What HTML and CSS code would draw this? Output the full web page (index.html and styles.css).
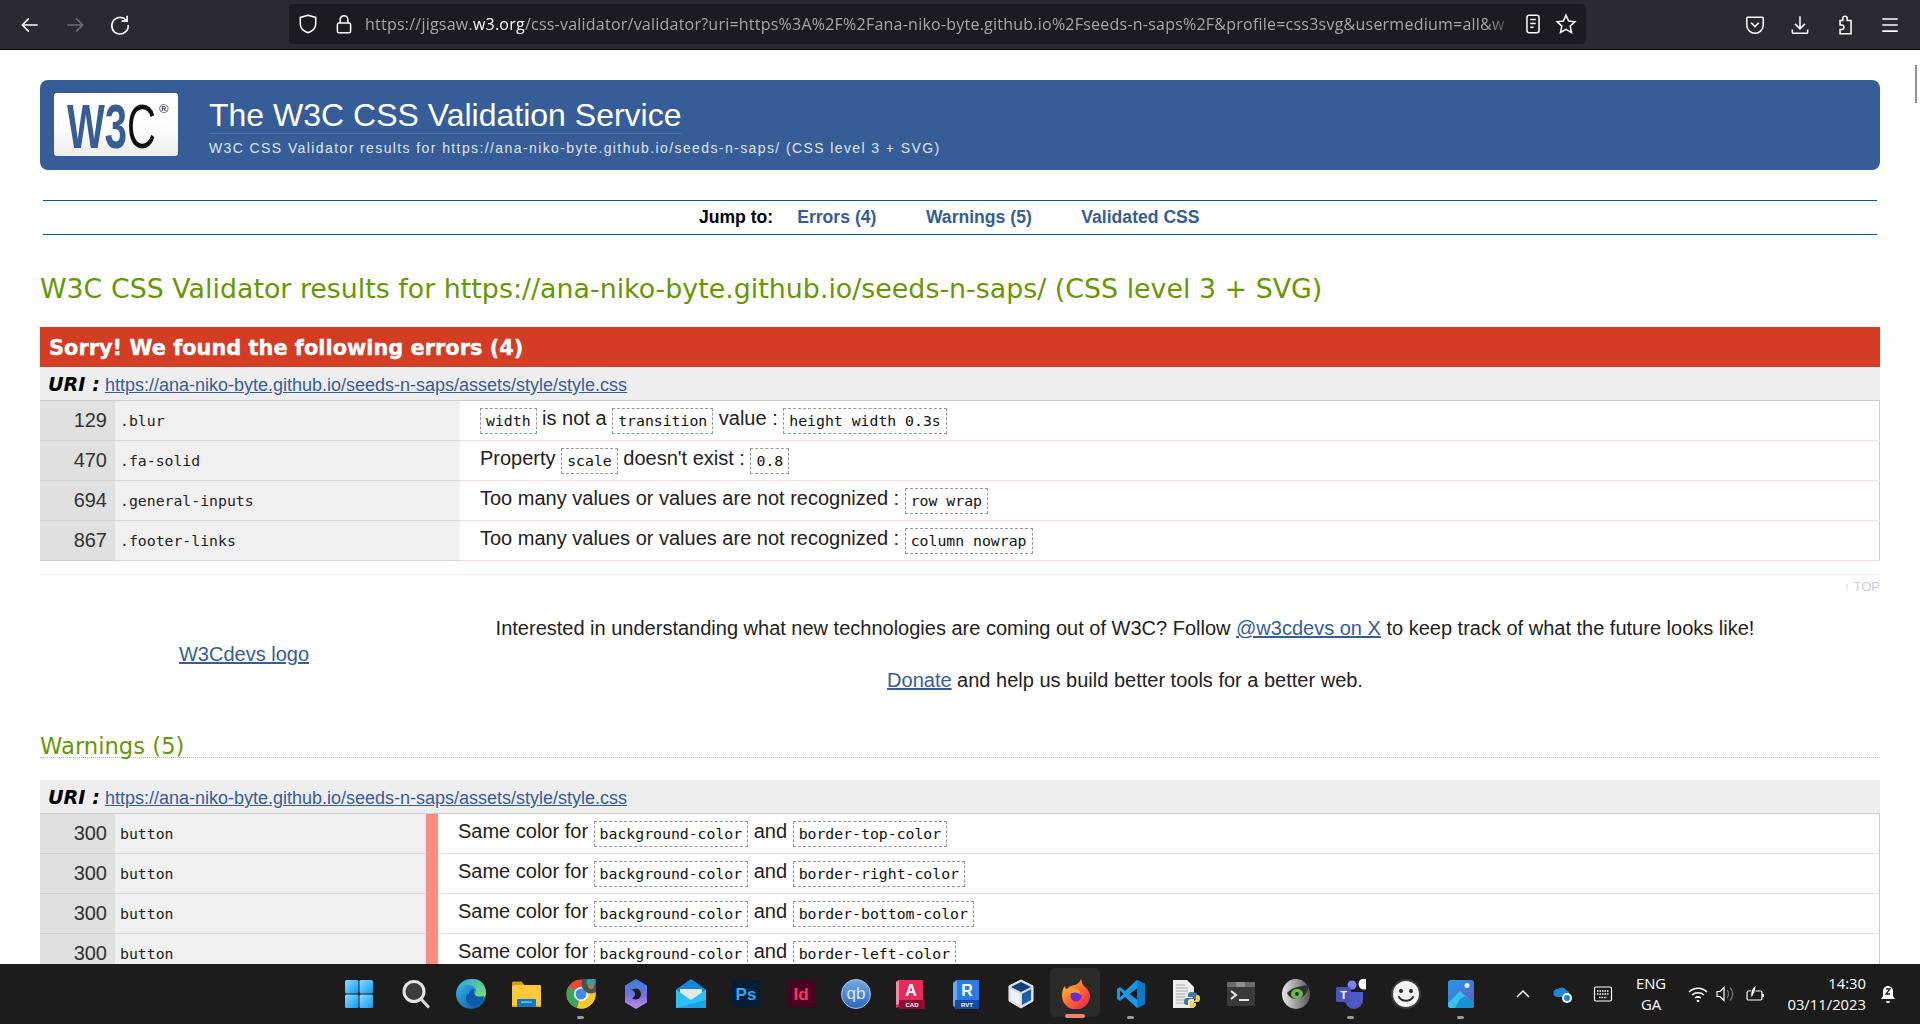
FILE: index.html
```html
<!DOCTYPE html>
<html lang="en">
<head>
<meta charset="utf-8">
<title>W3C CSS Validator results</title>
<link rel="stylesheet" href="styles.css">
</head>
<body>
<div class="screen">
  <header class="toolbar">
    <div class="nav-buttons">
      <svg class="tb-icon" viewBox="0 0 20 20"><path d="M17 10H3M9 4l-6 6 6 6" fill="none" stroke="#fbfbfe" stroke-width="1.4"/></svg>
      <svg class="tb-icon" viewBox="0 0 20 20"><path d="M3 10h14M11 4l6 6-6 6" fill="none" stroke="#6f6e75" stroke-width="1.4"/></svg>
      <svg class="tb-icon" viewBox="0 0 20 20"><path d="M15.5 5.5A7.5 7.5 0 1 0 17.5 10M16.5 1.5v5h-5" fill="none" stroke="#fbfbfe" stroke-width="1.5"/></svg>
    </div>
    <div class="urlbar">
      <svg class="url-icon" viewBox="0 0 20 20"><path d="M10 2l7 2v6c0 4-3 6.5-7 8-4-1.500-7-4-7-8V4z" fill="none" stroke="#fbfbfe" stroke-width="1.4"/></svg>
      <svg class="url-icon lock" viewBox="0 0 20 20"><path d="M6.5 9V6a3.5 3.5 0 0 1 7 0v3" fill="none" stroke="#fbfbfe" stroke-width="1.4"/><rect x="4" y="9" width="12" height="9" rx="1.5" fill="none" stroke="#fbfbfe" stroke-width="1.4"/></svg>
      <div class="url-text">https://jigsaw.<b>w3.org</b>/css-validator/validator?uri=https%3A%2F%2Fana-niko-byte.github.io%2Fseeds-n-saps%2F&amp;profile=css3svg&amp;usermedium=all&amp;w</div>
      <svg class="url-icon reader" viewBox="0 0 20 20"><rect x="4.5" y="2" width="11" height="16" rx="2" fill="none" stroke="#fbfbfe" stroke-width="1.4"/><path d="M7.5 6h5M7.5 9.500h5M7.5 13h3" stroke="#fbfbfe" stroke-width="1.4"/></svg>
      <svg class="url-icon star" viewBox="0 0 20 20"><path d="M10 2l2.4 5.400 5.600.6-4.200 3.900 1.200 5.800L10 14.800l-5 2.900 1.200-5.800L2 8l5.600-.6z" fill="none" stroke="#fbfbfe" stroke-width="1.4"/></svg>
    </div>
    <div class="tool-buttons">
      <svg class="tb-icon" viewBox="0 0 20 20"><path d="M3.5 3h13a1 1 0 0 1 1 1v6a7.500 7.500 0 0 1-15 0V4a1 1 0 0 1 1-1z" fill="none" stroke="#fbfbfe" stroke-width="1.4"/><path d="M6.5 8l3.500 3.500L13.500 8" fill="none" stroke="#fbfbfe" stroke-width="1.4"/></svg>
      <svg class="tb-icon" viewBox="0 0 20 20"><path d="M10 2v11M5.5 9l4.500 4.500L14.500 9M3 14v2.500a1 1 0 0 0 1 1h12a1 1 0 0 0 1-1V14" fill="none" stroke="#fbfbfe" stroke-width="1.4"/></svg>
      <svg class="tb-icon" viewBox="0 0 20 20"><path d="M8 5V4a2 2 0 0 1 4 0v2h3.500v12H5.500v-4H7a2 2 0 0 0 0-4H5.500V6H8z" fill="none" stroke="#fbfbfe" stroke-width="1.4"/></svg>
      <svg class="tb-icon" viewBox="0 0 20 20"><path d="M3 4.500h14M3 10h14M3 15.500h14" stroke="#fbfbfe" stroke-width="1.5"/></svg>
    </div>
  </header>

  <main class="page">
    <div class="scroll-thumb"></div>
    <section class="banner">
      <div class="logo-box">
        <svg class="logo" viewBox="0 0 124 62"><text class="logo-mark" x="13" y="55" textLength="89" lengthAdjust="spacingAndGlyphs"><tspan class="logo-blue">W3</tspan><tspan class="logo-black">C</tspan></text><text class="logo-reg" x="105" y="20">®</text></svg>
      </div>
      <div class="banner-text">
        <h1 class="service-title">The W3C CSS Validation Service</h1>
        <p class="service-sub">W3C CSS Validator results for https://ana-niko-byte.github.io/seeds-n-saps/ (CSS level 3 + SVG)</p>
      </div>
    </section>

    <nav class="jump">
      <span class="jump-label">Jump to:</span>
      <a class="jump-link" href="#errors">Errors (4)</a>
      <a class="jump-link" href="#warnings">Warnings (5)</a>
      <a class="jump-link" href="#css">Validated CSS</a>
    </nav>

    <h2 class="results-title">W3C CSS Validator results for https://ana-niko-byte.github.io/seeds-n-saps/ (CSS level 3 + SVG)</h2>

    <h3 class="error-bar" id="errors">Sorry! We found the following errors (4)</h3>
    <div class="uri-row"><span class="uri-label">URI :</span> <a class="uri-link" href="#">https://ana-niko-byte.github.io/seeds-n-saps/assets/style/style.css</a></div>
    <table class="report">
      <colgroup><col class="col-line"><col class="col-sel"><col></colgroup>
      <tr><td class="line">129</td><td class="sel">.blur</td><td class="msg"><code>width</code> is not a <code>transition</code> value : <code>height width 0.3s</code></td></tr>
      <tr><td class="line">470</td><td class="sel">.fa-solid</td><td class="msg">Property <code>scale</code> doesn't exist : <code>0.8</code></td></tr>
      <tr><td class="line">694</td><td class="sel">.general-inputs</td><td class="msg">Too many values or values are not recognized : <code>row wrap</code></td></tr>
      <tr><td class="line">867</td><td class="sel">.footer-links</td><td class="msg">Too many values or values are not recognized : <code>column nowrap</code></td></tr>
    </table>

    <div class="top-row"><a class="top-link" href="#">↑ TOP</a></div>

    <section class="promo">
      <a class="promo-logo" href="#">W3Cdevs logo</a>
      <div class="promo-text">
        <p class="promo-line">Interested in understanding what new technologies are coming out of W3C? Follow <a href="#">@w3cdevs on X</a> to keep track of what the future looks like!</p>
        <p class="promo-line"><a href="#">Donate</a> and help us build better tools for a better web.</p>
      </div>
    </section>

    <h3 class="warn-title" id="warnings">Warnings (5)</h3>
    <div class="uri-row"><span class="uri-label">URI :</span> <a class="uri-link" href="#">https://ana-niko-byte.github.io/seeds-n-saps/assets/style/style.css</a></div>
    <table class="report warn">
      <colgroup><col class="col-line"><col class="col-sel-w"><col class="col-level"><col></colgroup>
      <tr><td class="line">300</td><td class="sel">button</td><td class="level"></td><td class="msg">Same color for <code>background-color</code> and <code>border-top-color</code></td></tr>
      <tr><td class="line">300</td><td class="sel">button</td><td class="level"></td><td class="msg">Same color for <code>background-color</code> and <code>border-right-color</code></td></tr>
      <tr><td class="line">300</td><td class="sel">button</td><td class="level"></td><td class="msg">Same color for <code>background-color</code> and <code>border-bottom-color</code></td></tr>
      <tr><td class="line">300</td><td class="sel">button</td><td class="level"></td><td class="msg">Same color for <code>background-color</code> and <code>border-left-color</code></td></tr>
    </table>
  </main>

  <footer class="taskbar">
    <div class="apps">
      <div class="app"><svg class="app-icon" viewBox="0 0 30 30"><defs><linearGradient id="win" x1="0" y1="0" x2="1" y2="1"><stop offset="0" stop-color="#8fdcff"/><stop offset="1" stop-color="#0a9bf5"/></linearGradient></defs><g fill="url(#win)"><rect x="1" y="1" width="13.5" height="13.5" rx="1.5"/><rect x="15.5" y="1" width="13.5" height="13.5" rx="1.5"/><rect x="1" y="15.5" width="13.5" height="13.5" rx="1.5"/><rect x="15.5" y="15.5" width="13.5" height="13.5" rx="1.5"/></g></svg></div>
      <div class="app"><svg class="app-icon" viewBox="0 0 30 30"><circle cx="13" cy="12.5" r="10" fill="#3d3d3d" stroke="#e4e4e4" stroke-width="3"/><path d="M20.5 20.5L27 27.5" stroke="#d8d8d8" stroke-width="3.2" stroke-linecap="round"/></svg></div>
      <div class="app"><svg class="app-icon" viewBox="0 0 30 30"><defs><linearGradient id="edge1" x1="0" y1="0" x2="1" y2="1"><stop offset="0" stop-color="#35c1f1"/><stop offset="1" stop-color="#0b4d9e"/></linearGradient><linearGradient id="edge2" x1="0" y1="0" x2="1" y2="1"><stop offset="0" stop-color="#2ca9d8"/><stop offset="1" stop-color="#7fe36b"/></linearGradient></defs><circle cx="15" cy="15" r="15" fill="url(#edge1)"/><path d="M3 9C6 2 13 0 17 0c8 0 13 6 13 14 0 4-3 6-7 6-3 0-5-1-5-3 0-3 2-3 2-6-1-4-6-6-10-5-3 .5-5 1.5-7 3z" fill="url(#edge2)"/><path d="M13 15c0-3 2-5 5-5-1 3 0 5 2 7 2 1 5 1 8 0-2 7-7 11-12 10-4-1-6-5-6-8s1-4 3-4z" fill="#0c59a4"/></svg></div>
      <div class="app"><svg class="app-icon" viewBox="0 0 30 30"><path d="M1 4a1.5 1.5 0 0 1 1.5-1.5h8l3 3.5H1z" fill="#d99e0b"/><rect x="1" y="6" width="29" height="22" rx="1" fill="#fcc83d"/><rect x="1" y="26.5" width="29" height="1.5" fill="#e0a40f"/><rect x="6" y="20" width="19" height="8" rx="1" fill="#0f79c4"/><rect x="10" y="22.5" width="11" height="1.2" fill="#9ed4f5"/></svg></div>
      <div class="app"><svg class="app-icon" viewBox="0 0 30 30"><circle cx="15" cy="15" r="14.5" fill="#e84b3a"/><path d="M15 15L2.5 7.500A14.5 14.5 0 0 0 11 29z" fill="#3aa757"/><path d="M15 15l-4 14A14.5 14.5 0 0 0 28.500 9.500H15z" fill="#fbc72e"/><circle cx="15" cy="15" r="7" fill="#fff"/><circle cx="15" cy="15" r="5.5" fill="#3f89f3"/><circle cx="25" cy="5" r="9.5" fill="#4a5550"/><circle cx="25" cy="3" r="4.5" fill="#2e9fa8"/><circle cx="25" cy="7" r="3" fill="#96806c"/></svg></div>
      <div class="app"><svg class="app-icon" viewBox="0 0 30 30"><defs><linearGradient id="cop" x1="0" y1="0" x2="0" y2="1"><stop offset="0" stop-color="#2f86d8"/><stop offset=".55" stop-color="#7a6fe0"/><stop offset="1" stop-color="#c48ae8"/></linearGradient></defs><path d="M15 0l11 6.5v17L15 30 4 23.5v-17z" fill="url(#cop)"/><path d="M9.500 11l5-1.500c4 0 5.500 3 5.500 5.500s-1.500 5.500-5.500 5.500c-1.500 0-3-1-3.500-1.500 2-.5 3-2 3-4s-1.500-3.500-4.500-4.500z" fill="#1b1b1b"/></svg></div>
      <div class="app"><svg class="app-icon" viewBox="0 0 30 30"><path d="M0 10.5L15 0l15 10.5V29H0z" fill="#1287d8"/><path d="M4 10h22v6l-11 6-11-6z" fill="#e8e8e8"/><path d="M0 10.5L15 21l15-10.5V29H0z" fill="#2cc0f3"/><path d="M0 29l30-8V29z" fill="#1199e2" opacity=".7"/></svg></div>
      <div class="app"><svg class="app-icon" viewBox="0 0 30 30"><rect x="1" y="1" width="28" height="27" rx="5" fill="#001e36"/><text class="icon-text ps" x="15" y="21">Ps</text></svg></div>
      <div class="app"><svg class="app-icon" viewBox="0 0 30 30"><rect x="1" y="1" width="28" height="27" rx="5" fill="#49021f"/><text class="icon-text id" x="15" y="21">Id</text></svg></div>
      <div class="app"><svg class="app-icon" viewBox="0 0 30 30"><defs><linearGradient id="qb" x1="0" y1="0" x2="0" y2="1"><stop offset="0" stop-color="#76a9e6"/><stop offset="1" stop-color="#2c68bf"/></linearGradient></defs><circle cx="15" cy="15" r="14.5" fill="url(#qb)" stroke="#a6c8ee" stroke-width="1"/><text class="icon-text qb" x="15" y="20">qb</text></svg></div>
      <div class="app"><svg class="app-icon" viewBox="0 0 30 30"><path d="M0 3l3-2h24v27H3l-3 1z" fill="#e8295c"/><path d="M0 3v23l3-1V1z" fill="#f08aa6"/><rect x="3" y="21" width="26" height="9" fill="#8e0d33"/><text class="icon-text a" x="15" y="17">A</text><text class="icon-text sub" x="16" y="28">CAD</text></svg></div>
      <div class="app"><svg class="app-icon" viewBox="0 0 30 30"><path d="M2 4l4-3h22v29H6l-4-3z" fill="#2a7be8"/><path d="M2 4v22l4 3V1z" fill="#6aa9f3"/><rect x="4" y="21" width="24" height="9" fill="#104aa3"/><text class="icon-text a" x="16" y="17">R</text><text class="icon-text sub" x="16" y="28">RVT</text></svg></div>
      <div class="app"><svg class="app-icon" viewBox="0 0 30 30"><path d="M15 1l12 6v15l-12 7-12-7V7z" fill="#d8dde5" stroke="#eef1f5" stroke-width="1"/><path d="M15 3l10 5-10 5-10-5z" fill="#123f78"/><path d="M5 10l9 5v11l-9-5z" fill="#eef1f5"/><path d="M16 15l9-5v11l-9 5z" fill="#1c5fa8"/></svg></div>
      <div class="app active"><svg class="app-icon" viewBox="0 0 30 30"><defs><linearGradient id="fx" x1="0" y1="0" x2="1" y2="1"><stop offset="0" stop-color="#ffcc33"/><stop offset=".5" stop-color="#ff6a2c"/><stop offset="1" stop-color="#e3155f"/></linearGradient></defs><path d="M20 0c1 3 1 5 3 7 4 3 6 6 6 10a14 13.500 0 0 1-28 0c0-5 1-8 3-10 0 2 1 3 2 3 2-3 6-4 8-4 3-1 5-3 6-6z" fill="url(#fx)"/><circle cx="15" cy="17" r="5.5" fill="#6c2bd0"/><path d="M4 12c3-3 7-4 11-2 3 1 5 3 5 6-2-2-5-3-8-2-3 0-6 0-8-2z" fill="#ff9d3a"/></svg></div>
      <div class="app"><svg class="app-icon" viewBox="0 0 30 30"><path d="M21 1l8 4v20l-8 4L9 18l-5 4-3-2v-10l3-2 5 4z" fill="#1a97e4"/><path d="M21 1l8 4v20l-8 4z" fill="#0a7bc8"/><path d="M21 9.5L13.500 15l7.500 5.500z" fill="#1b1b1b"/><path d="M4 11.5l3.500 3.500L4 18.500z" fill="#1b1b1b"/></svg></div>
      <div class="app"><svg class="app-icon" viewBox="0 0 30 30"><path d="M2 1h14l7 7v21H2z" fill="#ececec"/><path d="M5 6h9M5 9h12M5 12h12M5 15h9M5 18h9M5 21h9M5 24h9" stroke="#aaa" stroke-width="1"/><path d="M18 13c-3 0-4 1-4 3v2h5v1h-6c-2 0-3 1-3 4 0 2 1 3 3 3h1v-3c0-2 1-3 3-3h4c1 0 2-1 2-2v-3c0-1-2-2-5-2z" transform="translate(3 0)" fill="#3b78aa"/><path d="M20 29c3 0 5-1 5-3v-2h-5v-1h6c2 0 3-1 3-4 0-2-1-3-3-3h-1v3c0 2-1 3-3 3h-3v3c0 3 0 4 1 4z" fill="#fcd24a"/></svg></div>
      <div class="app"><svg class="app-icon" viewBox="0 0 30 30"><rect x="1" y="3" width="28" height="24" rx="1" fill="#3a3a3a"/><rect x="1" y="3" width="28" height="5" fill="#6b6b6b"/><rect x="10" y="3" width="9" height="5" fill="#8f8f8f"/><path d="M5 12l5 4-5 4" fill="none" stroke="#e8e8e8" stroke-width="2"/><path d="M13 21h10" stroke="#e8e8e8" stroke-width="2"/></svg></div>
      <div class="app"><svg class="app-icon" viewBox="0 0 30 30"><defs><linearGradient id="eye" x1="0" y1="0" x2="1" y2="0"><stop offset="0" stop-color="#e8e8e8"/><stop offset="1" stop-color="#555"/></linearGradient></defs><ellipse cx="15" cy="15" rx="14" ry="15" fill="url(#eye)"/><path d="M6 14c5-6 14-7 22-8-1 8-6 14-13 14-4 0-7-2-9-6z" fill="#2f2f2f"/><ellipse cx="16" cy="15" rx="6" ry="5" fill="#6ebb55"/><circle cx="16" cy="15" r="2" fill="#1d3316"/></svg></div>
      <div class="app"><svg class="app-icon" viewBox="0 0 30 30"><circle cx="16" cy="6" r="4.5" fill="#7b83eb"/><path d="M8 13h19v8a9 9 0 0 1-18 0z" fill="#5059c9"/><rect x="0" y="8" width="15" height="15" rx="1.5" fill="#4b53bc"/><text class="icon-text t" x="7.5" y="20">T</text><circle cx="28" cy="5" r="5.500" fill="#fbfbfb"/></svg></div>
      <div class="app"><svg class="app-icon" viewBox="0 0 30 30"><circle cx="15" cy="15" r="14" fill="#f4f4f4" stroke="#3c3c3c" stroke-width="2"/><circle cx="10" cy="12" r="2" fill="#2b2b2b"/><circle cx="20" cy="12" r="2" fill="#2b2b2b"/><path d="M8 18c3 5 11 5 14 0" fill="none" stroke="#2b2b2b" stroke-width="2" stroke-linecap="round"/></svg></div>
      <div class="app"><svg class="app-icon" viewBox="0 0 30 30"><defs><linearGradient id="ph" x1="0" y1="0" x2="1" y2="1"><stop offset="0" stop-color="#1f9ee8"/><stop offset="1" stop-color="#7153c2"/></linearGradient></defs><rect x="2" y="1" width="26" height="28" rx="3" fill="url(#ph)"/><circle cx="21" cy="6.5" r="2.5" fill="#dff3ff"/><path d="M2 24l12-12 14 13v1a3 3 0 0 1-3 3H5a3 3 0 0 1-3-3z" fill="#35c2ee"/><path d="M14 20l5-3 9 8v1a3 3 0 0 1-3 3H9z" fill="#0a7fc9" opacity=".7"/></svg></div>
    </div>
    <div class="tray">
      <svg class="tray-icon chev" viewBox="0 0 16 16"><path d="M2 11l6-6 6 6" fill="none" stroke="#fff" stroke-width="1.5"/></svg>
      <svg class="tray-icon cloud" viewBox="0 0 20 20"><path d="M4 13a4 4 0 0 1 1-8 5 5 0 0 1 8 1 4 4 0 0 1 2 7z" fill="#1c86d6"/><circle cx="14" cy="14" r="5" fill="#fff"/><circle cx="14" cy="14" r="3" fill="#1c86d6"/></svg>
      <svg class="tray-icon kbd" viewBox="0 0 20 20"><rect x="1.5" y="3" width="17" height="14" rx="1.5" fill="none" stroke="#fff" stroke-width="1.2"/><path d="M4 7h12M4 10h12M6 13.500h8" stroke="#fff" stroke-width="1.5" stroke-dasharray="1.5 1"/></svg>
      <div class="lang"><span>ENG</span><span>GA</span></div>
      <svg class="tray-icon wifi" viewBox="0 0 20 20"><path d="M1 8c5-5 13-5 18 0M4 11c3.500-3 8.500-3 12 0M7 14c2-1.500 4-1.500 6 0" fill="none" stroke="#fff" stroke-width="1.5"/><circle cx="10" cy="17" r="1.3" fill="#fff"/></svg>
      <svg class="tray-icon speaker" viewBox="0 0 20 20"><path d="M2 7.5h3l4-4v13l-4-4H2z" fill="none" stroke="#fff" stroke-width="1.2"/><path d="M12 6c2 2 2 6 0 8M15 3.500c3.500 3.500 3.500 9.500 0 13" fill="none" stroke="#777" stroke-width="1.2"/></svg>
      <svg class="tray-icon batt" viewBox="0 0 20 20"><rect x="2" y="7" width="15" height="9" rx="1.5" fill="none" stroke="#fff" stroke-width="1.2"/><rect x="17" y="10" width="2" height="3" fill="#fff"/><path d="M11 1c-4 3-6 7-5 13 3-3 5-7 5-13z" fill="#fff" stroke="#1b1b1b"/></svg>
      <div class="clock"><span>14:30</span><span>03/11/2023</span></div>
      <svg class="tray-icon bell" viewBox="0 0 20 20"><path d="M10 2a5 5 0 0 0-5 5v5l-2 3h14l-2-3V7a5 5 0 0 0-5-5z" fill="#fff"/><path d="M8 17h4a2 2 0 0 1-4 0z" fill="#fff"/><path d="M8 5h4l-4 5h4" fill="none" stroke="#1b1b1b" stroke-width="1.3"/></svg>
    </div>
  </footer>
</div>
</body>
</html>
```

FILE: styles.css
```css
* { box-sizing: border-box; }
html, body { margin: 0; padding: 0; }
body { font-family: "Liberation Sans", Arial, sans-serif; background: #fff; color: #000; }

.screen { width: 1920px; height: 1024px; display: flex; flex-direction: column; overflow: hidden; }

/* browser toolbar */
.toolbar { height: 50px; flex: none; display: flex; align-items: center; background: #2b2a33; border-bottom: 1px solid #0c0c0d; padding-left: 19px; }
.nav-buttons { display: flex; gap: 23px; width: 270px; flex: none; }
.tb-icon { width: 22px; height: 22px; flex: none; }
.urlbar { width: 1297px; height: 40px; flex: none; background: #1c1b22; border-radius: 4px; display: flex; align-items: center; padding: 0 9px 0 8px; margin-top: -2px; }
.url-icon { width: 22px; height: 22px; flex: none; }
.lock { margin-left: 14px; }
.url-text { flex: 1; min-width: 0; margin-left: 10px; font-family: "Open Sans", sans-serif; font-size: 16px; letter-spacing: .23px; color: #a5a5aa; white-space: nowrap; -webkit-mask-image: linear-gradient(to left, transparent 0, #000 28px); mask-image: linear-gradient(to left, transparent 0, #000 28px); }
.url-text b { font-weight: 400; color: #fbfbfe; }
.reader { margin-left: 7px; }
.star { margin-left: 11px; }
.tool-buttons { display: flex; gap: 23px; margin-left: 158px; flex: none; }

/* page */
.page { flex: 1; min-height: 0; position: relative; overflow: hidden; background: #fff; padding: 30px 40px 0; }
.scroll-thumb { position: absolute; top: 15px; right: 3px; width: 2px; height: 38px; background: #8f8f9d; }

.banner { height: 90px; background: #365d97; border-radius: 8px; display: flex; align-items: flex-start; }
.logo-box { width: 124px; height: 63px; margin: 13px 0 0 14px; flex: none; background: linear-gradient(#fff 50%, #ececec); border-radius: 3px; }
.logo { display: block; width: 124px; height: 62px; overflow: visible; }
.logo-mark { font-family: "Liberation Sans", sans-serif; font-size: 63px; font-weight: 700; }
.logo-blue { fill: #365d97; }
.logo-black { fill: #111; font-weight: 400; }
.logo-reg { font-family: "Liberation Sans", sans-serif; font-size: 13px; font-weight: 700; fill: #555; }
.banner-text { margin-left: 31px; color: #fff; }
.service-title { margin: 17px 0 0; font-size: 32px; line-height: 36px; font-weight: 400; border-bottom: 1px solid #4f76ad; display: inline-block; }
.service-sub { margin: 6px 0 0; font-size: 14px; line-height: 16px; letter-spacing: 1.4px; color: #dfe6f0; }

.jump { margin: 30px 3px 0; height: 35px; border-top: 1px solid #005a9c; border-bottom: 1px solid #005a9c; display: flex; align-items: center; justify-content: center; padding-right: 21.5px; font-size: 17.6px; font-weight: 700; }
.jump-label { color: #000; margin-right: 24px; }
.jump-link { color: #365d97; text-decoration: none; margin-right: 49.5px; }
.jump-link:last-child { margin-right: 0; }

.results-title { margin: 0; padding-top: 36px; height: 92px; font-family: "DejaVu Sans", Verdana, sans-serif; font-size: 26.85px; line-height: 36px; font-weight: 400; color: #669900; white-space: nowrap; }

.error-bar { margin: 0; height: 40px; background: #d23d24; color: #fff; padding: 2px 9px 0; font-family: "DejaVu Sans", Verdana, sans-serif; font-size: 20.9px; line-height: 38px; font-weight: 700; -webkit-text-stroke: .35px #fff; }
.uri-row { height: 33px; background: #eee; padding-left: 8px; line-height: 35px; font-size: 18px; }
.uri-label { font-family: "DejaVu Sans", Verdana, sans-serif; font-size: 19.2px; font-weight: 700; font-style: italic; color: #000; }
.uri-link { color: #365d97; }

.report { width: 100%; border-collapse: collapse; table-layout: fixed; border-top: 1px solid #ccc; border-right: 1px solid #ccc; }
.report td { height: 40px; padding: 0; }
.col-line { width: 75px; }
.col-sel { width: 345px; }
.col-sel-w { width: 311px; }
.col-level { width: 12px; }
.report .line { background: #e0e0e0; border-bottom: 1px solid #d0d0d0; text-align: right; padding-right: 8px; font-size: 20px; color: #333; }
.report .sel { background: #f0f0f0; border-bottom: 1px solid #d8d8d8; padding-left: 5px; font-family: "DejaVu Sans Mono", monospace; font-size: 14.8px; color: #222; }
.report .msg { border-bottom: 1px solid #fdd; padding-left: 20px; font-size: 20px; color: #222; }
.report .level { background: #fb8d80; border-bottom: 1px solid #fb8d80; }
code { display: inline-block; font-family: "DejaVu Sans Mono", monospace; font-size: 14.8px; line-height: 24px; padding: 0 5px; border: 1px dashed #999; color: #111; vertical-align: -1px; }

.top-row { margin-top: 13px; border-top: 1px solid #eef; text-align: right; height: 43px; padding-top: 2px; }
.top-link { font-size: 13px; color: #c8cde0; text-decoration: none; }

.promo { display: grid; grid-template-columns: 408px 1354px; font-size: 20px; color: #222; }
.promo-logo { color: #365d97; align-self: center; justify-self: center; }
.promo-text { display: flex; flex-direction: column; gap: 29px; text-align: center; }
.promo-line { margin: 0; line-height: 23px; }
.promo a { color: #365d97; }

.warn-title { margin: 39px 0 0; height: 27px; border-bottom: 1px dotted #bbb; font-family: "DejaVu Sans", Verdana, sans-serif; font-size: 22.7px; line-height: 30px; font-weight: 400; color: #669900; }
.warn-title + .uri-row { margin-top: 22px; }

/* taskbar */
.taskbar { height: 60px; flex: none; background: #1c1c1c; display: flex; align-items: stretch; padding-left: 333px; color: #fff; }
.apps { display: flex; }
.app { width: 55px; display: flex; align-items: center; justify-content: center; position: relative; }
.app:first-child { margin: 0 2px 0 -2px; }
.app-icon { width: 30px; height: 30px; }
.app:nth-child(5)::after, .app:nth-child(15)::after, .app:nth-child(19)::after, .app:nth-child(21)::after { content: ""; position: absolute; bottom: 5px; left: 24px; width: 7px; height: 3px; border-radius: 2px; background: #9a9a9a; }
.active::before { content: ""; position: absolute; top: 4px; left: 2px; width: 50px; height: 49px; border-radius: 5px; background: #2a2a2a; }
.active .app-icon { position: relative; }
.active::after { content: ""; position: absolute; bottom: 6px; left: 17px; width: 20px; height: 4px; border-radius: 2px; background: #f2846a; }

.icon-text { font-family: "Liberation Sans", sans-serif; font-weight: 700; text-anchor: middle; }
.ps { font-size: 17px; fill: #31a8ff; }
.id { font-size: 17px; fill: #ff3366; }
.qb { font-size: 17px; font-weight: 400; fill: #d8e8fb; }
.a { font-size: 16px; fill: #fff; }
.sub { font-size: 6px; fill: #fff; }
.t { font-size: 11px; fill: #fff; }

.tray { margin-left: auto; display: flex; align-items: center; width: 426px; flex: none; font-family: "Open Sans", sans-serif; font-size: 14.8px; }
.tray-icon { flex: none; }
.chev { width: 16px; height: 16px; margin-left: 21px; }
.cloud { width: 20px; height: 20px; margin-left: 22px; }
.kbd { width: 20px; height: 20px; margin-left: 20px; }
.lang { width: 50px; flex: none; margin-left: 13px; display: flex; flex-direction: column; align-items: center; gap: 4px; line-height: 17px; }
.wifi { width: 20px; height: 20px; margin-left: 12px; }
.speaker { width: 20px; height: 20px; margin-left: 7px; }
.batt { width: 20px; height: 20px; margin-left: 10px; }
.clock { width: 90px; flex: none; margin-left: 11px; display: flex; flex-direction: column; align-items: flex-end; gap: 4px; line-height: 17px; }
.bell { width: 20px; height: 20px; margin-left: 12px; }
```
